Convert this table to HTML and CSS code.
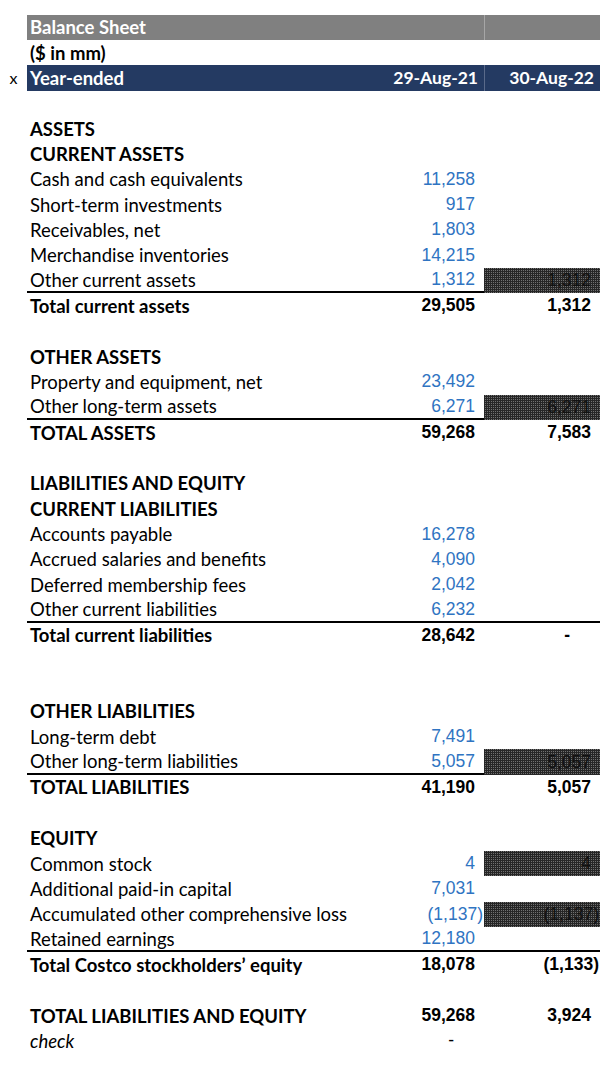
FILE: index.html
```html
<!DOCTYPE html>
<html>
<head>
<meta charset="utf-8">
<link rel="stylesheet" href="styles.css">
</head>
<body>
<div class="sheet">
  <div class="m"></div><div class="c lbl title">Balance Sheet</div><div class="c title"></div><div class="c title divl"></div>
  <div class="m"></div><div class="c lbl b">($ in mm)</div><div class="c"></div><div class="c"></div>
  <div class="m">x</div><div class="c lbl navy">Year-ended</div><div class="c num navy hdr">29-Aug-21</div><div class="c num navy hdr divn">30-Aug-22</div>
  <div class="m"></div><div class="c"></div><div class="c"></div><div class="c"></div>

  <div class="m"></div><div class="c lbl b">ASSETS</div><div class="c"></div><div class="c"></div>
  <div class="m"></div><div class="c lbl b">CURRENT ASSETS</div><div class="c"></div><div class="c"></div>
  <div class="m"></div><div class="c lbl">Cash and cash equivalents</div><div class="c num blue">11,258</div><div class="c"></div>
  <div class="m"></div><div class="c lbl">Short-term investments</div><div class="c num blue">917</div><div class="c"></div>
  <div class="m"></div><div class="c lbl">Receivables, net</div><div class="c num blue">1,803</div><div class="c"></div>
  <div class="m"></div><div class="c lbl">Merchandise inventories</div><div class="c num blue">14,215</div><div class="c"></div>
  <div class="m"></div><div class="c lbl ul">Other current assets</div><div class="c num blue ul">1,312</div><div class="c num pat">1,312</div>
  <div class="m"></div><div class="c lbl b">Total current assets</div><div class="c num nb">29,505</div><div class="c num nb">1,312</div>
  <div class="m"></div><div class="c"></div><div class="c"></div><div class="c"></div>

  <div class="m"></div><div class="c lbl b">OTHER ASSETS</div><div class="c"></div><div class="c"></div>
  <div class="m"></div><div class="c lbl">Property and equipment, net</div><div class="c num blue">23,492</div><div class="c"></div>
  <div class="m"></div><div class="c lbl ul">Other long-term assets</div><div class="c num blue ul">6,271</div><div class="c num pat">6,271</div>
  <div class="m"></div><div class="c lbl b">TOTAL ASSETS</div><div class="c num nb">59,268</div><div class="c num nb">7,583</div>
  <div class="m"></div><div class="c"></div><div class="c"></div><div class="c"></div>

  <div class="m"></div><div class="c lbl b">LIABILITIES AND EQUITY</div><div class="c"></div><div class="c"></div>
  <div class="m"></div><div class="c lbl b">CURRENT LIABILITIES</div><div class="c"></div><div class="c"></div>
  <div class="m"></div><div class="c lbl">Accounts payable</div><div class="c num blue">16,278</div><div class="c"></div>
  <div class="m"></div><div class="c lbl">Accrued salaries and benefits</div><div class="c num blue">4,090</div><div class="c"></div>
  <div class="m"></div><div class="c lbl">Deferred membership fees</div><div class="c num blue">2,042</div><div class="c"></div>
  <div class="m"></div><div class="c lbl ul">Other current liabilities</div><div class="c num blue ul">6,232</div><div class="c ul"></div>
  <div class="m"></div><div class="c lbl b">Total current liabilities</div><div class="c num nb">28,642</div><div class="c num nb dash">-</div>
  <div class="m"></div><div class="c"></div><div class="c"></div><div class="c"></div>
  <div class="m"></div><div class="c"></div><div class="c"></div><div class="c"></div>

  <div class="m"></div><div class="c lbl b">OTHER LIABILITIES</div><div class="c"></div><div class="c"></div>
  <div class="m"></div><div class="c lbl">Long-term debt</div><div class="c num blue">7,491</div><div class="c"></div>
  <div class="m"></div><div class="c lbl ul">Other long-term liabilities</div><div class="c num blue ul">5,057</div><div class="c num pat">5,057</div>
  <div class="m"></div><div class="c lbl b">TOTAL LIABILITIES</div><div class="c num nb">41,190</div><div class="c num nb">5,057</div>
  <div class="m"></div><div class="c"></div><div class="c"></div><div class="c"></div>

  <div class="m"></div><div class="c lbl b">EQUITY</div><div class="c"></div><div class="c"></div>
  <div class="m"></div><div class="c lbl">Common stock</div><div class="c num blue">4</div><div class="c num pat">4</div>
  <div class="m"></div><div class="c lbl">Additional paid-in capital</div><div class="c num blue">7,031</div><div class="c"></div>
  <div class="m"></div><div class="c lbl">Accumulated other comprehensive loss</div><div class="c num blue neg">(1,137)</div><div class="c num pat neg">(1,137)</div>
  <div class="m"></div><div class="c lbl ul">Retained earnings</div><div class="c num blue ul">12,180</div><div class="c ul"></div>
  <div class="m"></div><div class="c lbl b">Total Costco stockholders’ equity</div><div class="c num nb">18,078</div><div class="c num nb neg">(1,133)</div>
  <div class="m"></div><div class="c"></div><div class="c"></div><div class="c"></div>

  <div class="m"></div><div class="c lbl b">TOTAL LIABILITIES AND EQUITY</div><div class="c num nb">59,268</div><div class="c num nb">3,924</div>
  <div class="m"></div><div class="c lbl it">check</div><div class="c num dash">-</div><div class="c"></div>
</div>
</body>
</html>
```

FILE: styles.css
```css
html, body {
  margin: 0;
  padding: 0;
  background: #ffffff;
}

.sheet {
  display: grid;
  grid-template-columns: 27px 373px 84px 116px;
  grid-auto-rows: 25.35px;
  padding-top: 14.5px;
  font-family: "Lato", "Open Sans", sans-serif;
  color: #000;
}

.m {
  display: flex;
  align-items: center;
  justify-content: center;
  font-family: "Lato", sans-serif;
  font-size: 16px;
}

.c {
  display: flex;
  align-items: center;
  white-space: nowrap;
  box-sizing: border-box;
  min-width: 0;
}

.lbl {
  padding-left: 3px;
  font-size: 18.5px;
}

.b {
  font-weight: 700;
}

.it {
  font-style: italic;
}

.title {
  background: #808080;
  color: #ffffff;
  font-weight: 700;
}

.divl {
  border-left: 1px solid #a6a6a6;
}

.navy {
  background: #243a62;
  color: #ffffff;
  font-weight: 700;
}

.divn {
  border-left: 1px solid #5a6a8a;
}

.hdr {
  font-family: "Lato", sans-serif;
  font-size: 18px;
}

.num {
  justify-content: flex-end;
  padding-right: 9px;
  font-family: "Liberation Sans", Arial, sans-serif;
  font-size: 17.5px;
}

.navy.num {
  font-family: "Lato", sans-serif;
  padding-right: 6px;
}

.blue {
  color: #2f74c2;
}

.nb {
  font-weight: 700;
}

.neg {
  padding-right: 1px;
}

.dash {
  padding-right: 30px;
}

.ul {
  border-bottom: 2px solid #000;
}

.pat {
  color: #111111;
  background: repeating-conic-gradient(#707070 0 25%, #262626 0 100%) 0 0 / 2px 2px;
}
```
